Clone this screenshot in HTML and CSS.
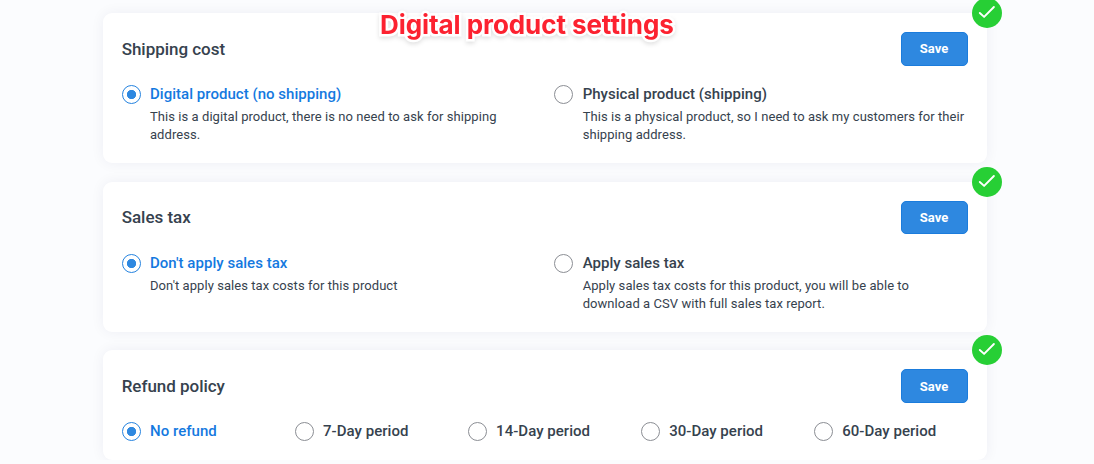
FILE: index.html
```
<!DOCTYPE html>
<html lang="en">
  <head>
    <meta charset="utf-8">
    <meta name="viewport" content="width=device-width, initial-scale=1">
    <title>Digital product settings</title>
    <link rel="stylesheet" href="styles.css">
  </head>
  <body>
    <h1 class="page-label">Digital product settings</h1>

    <main class="settings">
      <section class="card">
        <span class="badge"><svg viewBox="0 0 30 30"><path d="M7.8 15l4.3 3.9L21.9 9"/></svg></span>
        <div class="card-header">
          <h2>Shipping cost</h2>
          <button class="save" type="button">Save</button>
        </div>
        <div class="options two">
          <label class="option">
            <input type="radio" name="shipping" checked>
            <span class="title">Digital product (no shipping)</span>
            <span class="desc">This is a digital product, there is no need to ask for shipping address.</span>
          </label>
          <label class="option">
            <input type="radio" name="shipping">
            <span class="title">Physical product (shipping)</span>
            <span class="desc">This is a physical product, so I need to ask my customers for their shipping address.</span>
          </label>
        </div>
      </section>

      <section class="card">
        <span class="badge"><svg viewBox="0 0 30 30"><path d="M7.8 15l4.3 3.9L21.9 9"/></svg></span>
        <div class="card-header">
          <h2>Sales tax</h2>
          <button class="save" type="button">Save</button>
        </div>
        <div class="options two">
          <label class="option">
            <input type="radio" name="tax" checked>
            <span class="title">Don't apply sales tax</span>
            <span class="desc">Don't apply sales tax costs for this product</span>
          </label>
          <label class="option">
            <input type="radio" name="tax">
            <span class="title">Apply sales tax</span>
            <span class="desc">Apply sales tax costs for this product, you will be able to download a CSV with full sales tax report.</span>
          </label>
        </div>
      </section>

      <section class="card">
        <span class="badge"><svg viewBox="0 0 30 30"><path d="M7.8 15l4.3 3.9L21.9 9"/></svg></span>
        <div class="card-header">
          <h2>Refund policy</h2>
          <button class="save" type="button">Save</button>
        </div>
        <div class="options five">
          <label class="option">
            <input type="radio" name="refund" checked>
            <span class="title">No refund</span>
          </label>
          <label class="option">
            <input type="radio" name="refund">
            <span class="title">7-Day period</span>
          </label>
          <label class="option">
            <input type="radio" name="refund">
            <span class="title">14-Day period</span>
          </label>
          <label class="option">
            <input type="radio" name="refund">
            <span class="title">30-Day period</span>
          </label>
          <label class="option">
            <input type="radio" name="refund">
            <span class="title">60-Day period</span>
          </label>
        </div>
      </section>
    </main>
  </body>
</html>
```
FILE: styles.css
```
* { box-sizing: border-box; }
body { font-family: Roboto, sans-serif; margin: 0; background: #fbfcfe; color: #36424e; overflow: hidden; }
h1, h2 { margin: 0; }

/* floating label over the first card */
.page-label {
  position: absolute; top: 9px; left: 380px; z-index: 2;
  font: 650 26px/32px Inter, sans-serif; letter-spacing: -0.07px; white-space: nowrap;
  color: #fc2230; -webkit-text-stroke: 5px #fff; paint-order: stroke fill;
  filter: drop-shadow(0 2px 2px rgba(0,0,0,0.12));
}

.settings { width: 884px; margin-left: 103px; padding-top: 13.4px; display: flex; flex-direction: column; gap: 18.7px; }
.card { position: relative; padding: 18.7px; background: #fff; border-radius: 9px; box-shadow: 0 0 14px rgba(40,40,80,0.06); }
.card-header { display: flex; justify-content: space-between; align-items: center; margin-bottom: 19.5px; }
.card-header h2 { font-size: 17px; font-weight: 500; line-height: 22px; letter-spacing: -0.03px; }

.save {
  width: 67.5px; height: 33.7px; padding: 0 1px 0 0; border: 1px solid #1b7cdc; border-radius: 5px;
  background: #2e88e0; color: #fff; font: 700 13px Roboto, sans-serif; letter-spacing: 0.1px;
}

.badge { position: absolute; top: -15px; right: -15px; width: 30px; height: 30px; border-radius: 50%; background: #27cf35; }
.badge svg { display: block; width: 30px; height: 30px; fill: none; stroke: #fff; stroke-width: 1.9; stroke-linecap: round; stroke-linejoin: round; }

.options { display: grid; column-gap: 18.7px; }
.two { grid-template-columns: repeat(2, 1fr); min-height: 59.3px; }
.five { grid-template-columns: repeat(5, 1fr); }

.option { display: grid; grid-template-columns: 19px 1fr; column-gap: 9.3px; align-content: start; }
.option input {
  appearance: none; width: 19px; height: 19px; margin: 0;
  border: 1.4px solid #8b8e94; border-radius: 50%; background: #fff;
}
.option input:checked { border-color: #2583df; background: radial-gradient(circle, #2e88e0 4.3px, #fff 5px); }
.title { font-size: 15px; font-weight: 500; line-height: 18.7px; letter-spacing: 0.03px; }
.option input:checked + .title { color: #1479df; }
.desc { grid-column: 2; margin-top: 3.7px; font-size: 13px; line-height: 18.3px; letter-spacing: 0.06px; }
```
